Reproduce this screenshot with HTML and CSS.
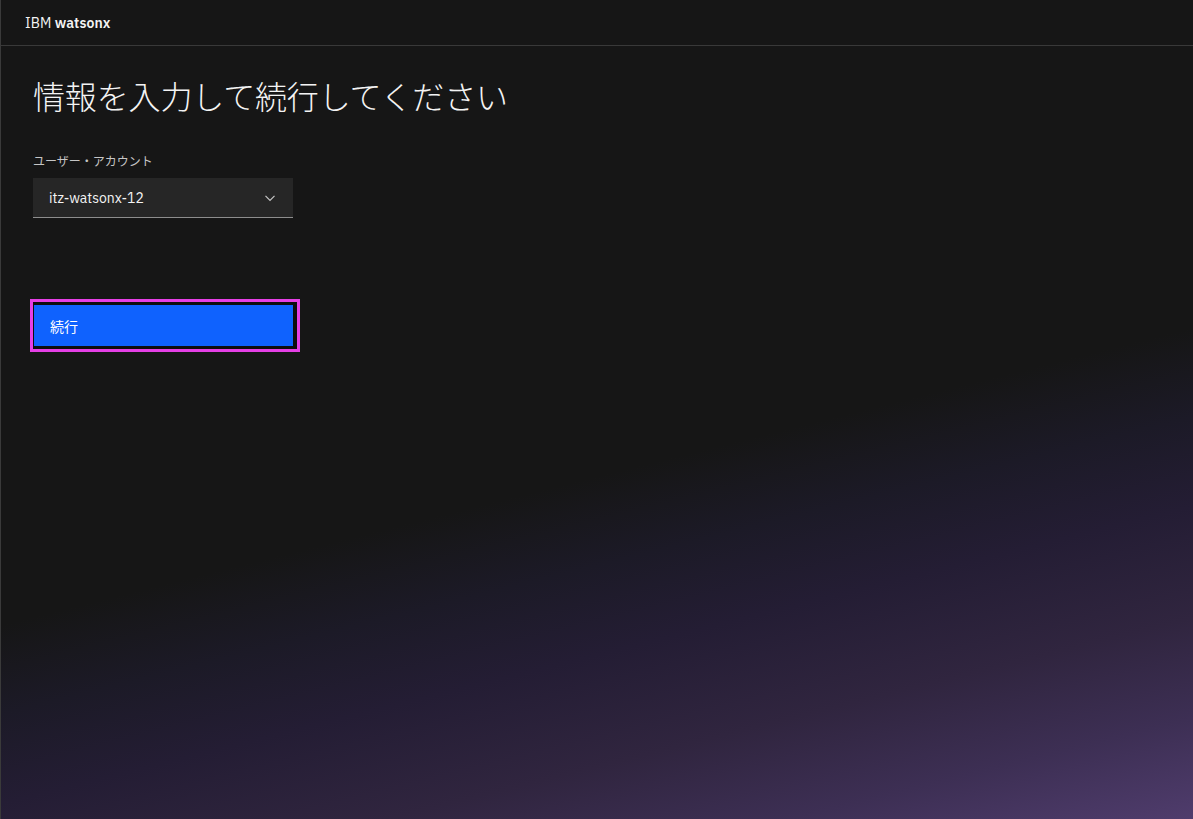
FILE: index.html
```html
<!DOCTYPE html>
<html lang="ja">
<head>
<meta charset="utf-8">
<title>IBM watsonx</title>
<link rel="stylesheet" href="styles.css">
</head>
<body>
<div class="app">
  <header class="topbar">
    <span class="brand">IBM <b>watsonx</b></span>
  </header>
  <main class="content">
    <h1 class="title">情報を入力して続行してください</h1>
    <label class="field-label">ユーザー・アカウント</label>
    <div class="dropdown">
      <span class="dropdown-value">itz-watsonx-12</span>
      <svg class="chevron" width="16" height="16" viewBox="0 0 16 16"><path d="M3.5 5.8 L8 10.3 L12.5 5.8" fill="none" stroke="#c6c6c6" stroke-width="1.2"/></svg>
    </div>
    <div class="highlight">
      <button class="primary-btn">続行</button>
    </div>
  </main>
</div>
</body>
</html>
```

FILE: styles.css
```css
html, body {
  margin: 0;
  padding: 0;
  height: 100%;
}
body {
  font-family: "IBM Plex Sans", "Inter", "Noto Sans CJK JP", sans-serif;
  color: #f4f4f4;
  background: #161616;
}
.app {
  min-height: 819px;
  box-sizing: border-box;
  border-left: 1px solid #3a3a3a;
  background:
    linear-gradient(166deg, #161616 0%, #161616 56%, #1c1a27 64%, #241d34 72%, #30253f 82%, #3d2f54 91%, #4f3c6c 100%);
}
.topbar {
  height: 45px;
  border-bottom: 1px solid #393939;
  display: flex;
  align-items: center;
  padding-left: 24px;
}
.brand {
  font-size: 14px;
  color: #f4f4f4;
  letter-spacing: 0.1px;
}
.brand b {
  font-weight: 600;
}
.content {
  padding: 0 32px;
  display: flex;
  flex-direction: column;
  align-items: flex-start;
}
.title {
  font-family: "Noto Sans CJK JP", sans-serif;
  font-weight: 300;
  font-size: 32px;
  line-height: 40px;
  margin: 29px 0 0 0;
  color: #f4f4f4;
  letter-spacing: -0.15px;
}
.field-label {
  font-family: "Noto Sans CJK JP", sans-serif;
  font-size: 12px;
  line-height: 16px;
  color: #c6c6c6;
  margin-top: 38px;
  margin-bottom: 9px;
}
.dropdown {
  box-sizing: border-box;
  width: 260px;
  height: 40px;
  background: #262626;
  border-bottom: 1px solid #8d8d8d;
  display: flex;
  align-items: center;
  justify-content: space-between;
  padding: 0 16px;
}
.dropdown-value {
  font-size: 14px;
  color: #f4f4f4;
}
.chevron {
  margin-right: -1px;
}
.highlight {
  margin-top: 81px;
  margin-left: -3px;
  border: 3px solid #e63fe6;
  background: #0e0e0e;
  padding: 3px 4px 3px 1px;
}
.primary-btn {
  display: block;
  width: 259px;
  height: 41px;
  border: 0;
  margin: 0;
  background: #0f62fe;
  color: #ffffff;
  font-family: "Noto Sans CJK JP", sans-serif;
  font-size: 14px;
  text-align: left;
  padding: 0 16px;
}
```
